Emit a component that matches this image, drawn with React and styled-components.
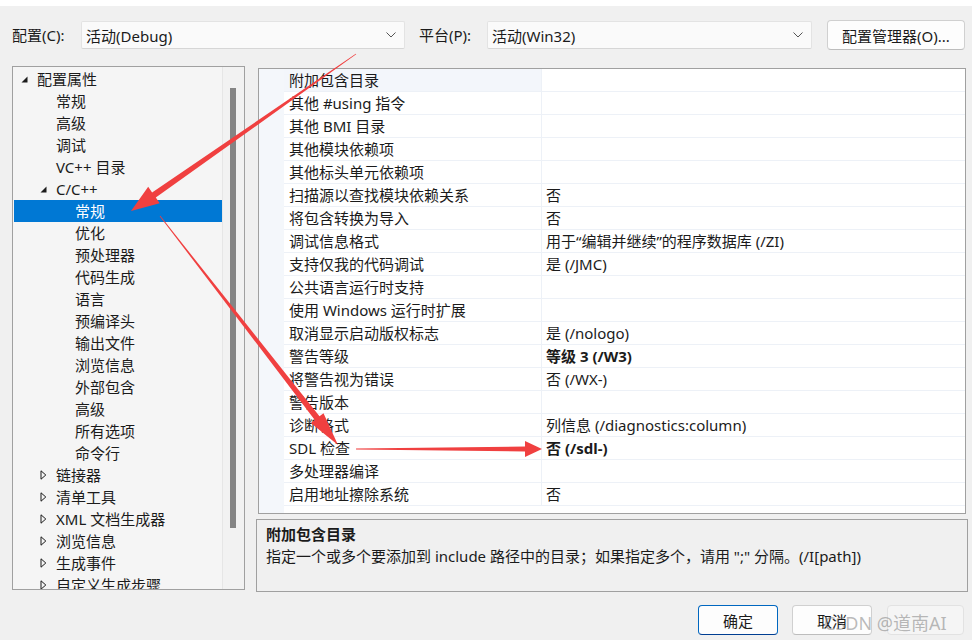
import React from 'react';
import styled, { createGlobalStyle } from 'styled-components';

const Global = createGlobalStyle`
  html, body { margin: 0; padding: 0; background: #f0f0f0; }
  body { font-family: "Noto Sans", "Noto Sans CJK SC", sans-serif; font-size: 15px; color: #1b1b1b; }
  * { box-sizing: border-box; }
`;

const Page = styled.div`
  position: relative;
  width: 972px;
  height: 640px;
  background: #f0f0f0;
  border-top: 6px solid #ffffff;
  overflow: hidden;
`;

const TopBar = styled.div`
  display: flex;
  align-items: center;
  height: 30px;
  margin-top: 14px;
  padding-left: 12px;
`;

const Label = styled.div`
  width: ${p => p.w}px;
  margin-left: ${p => p.ml || 0}px;
  white-space: nowrap;
  line-height: 30px;
`;

const Combo = styled.div`
  display: flex;
  align-items: center;
  justify-content: space-between;
  width: ${p => p.w}px;
  height: 28px;
  padding: 0 8px 0 4px;
  background: #fafafa;
  border: 1px solid #e3e3e3;
  border-bottom-color: #d6d6d6;
  border-radius: 2px;
  white-space: nowrap;
`;

const Button = styled.button`
  height: 30px;
  width: ${p => p.w}px;
  margin-left: ${p => p.ml || 0}px;
  font: inherit;
  color: ${p => (p.disabled ? '#a0a0a0' : '#1b1b1b')};
  background: ${p => (p.disabled ? '#f5f5f5' : '#fdfdfd')};
  border: 1px solid ${p => (p.primary ? '#0067c0' : p.disabled ? '#e2e2e2' : '#d0d0d0')};
  border-bottom-color: ${p => (p.primary ? '#003e92' : p.disabled ? '#e2e2e2' : '#bdbdbd')};
  border-radius: 4px;
  padding: 0;
`;

const Main = styled.div`
  display: flex;
  gap: 11px;
  margin-top: 16px;
  padding-left: 12px;
  height: 526px;
`;

const TreePanel = styled.div`
  display: flex;
  width: 233px;
  height: 524px;
  border: 1px solid #a0a0a0;
  background: #f5f5f5;
  overflow: hidden;
`;

const TreeList = styled.div`
  flex: 1;
  padding: 1px 0 0 1px;
  overflow: hidden;
`;

const TreeRow = styled.div`
  display: flex;
  align-items: center;
  height: 22px;
  line-height: 21px;
  padding-left: ${p => 7 + 19 * p.level}px;
  background: ${p => (p.selected ? '#0078d4' : 'transparent')};
  color: ${p => (p.selected ? '#ffffff' : '#1b1b1b')};
  white-space: nowrap;
`;

const Toggle = styled.span`
  display: flex;
  align-items: center;
  width: 16px;
  height: 22px;
`;

const ScrollTrack = styled.div`
  width: 22px;
  border-left: 1px solid #e6e6e6;
  background: #f2f2f2;
  padding: 21px 0 0 7px;
`;

const Thumb = styled.div`
  width: 6px;
  height: 440px;
  background: #858585;
`;

const RightCol = styled.div`
  display: flex;
  flex-direction: column;
  width: 712px;
`;

const Grid = styled.div`
  margin: 2px 2px 0;
  height: 446px;
  border: 1px solid #a0a0a0;
  background: #ffffff;
  display: flex;
`;

const Gutter = styled.div`
  width: 25px;
  background: #f4f7fb;
`;

const GridBody = styled.div`
  flex: 1;
`;

const GridRow = styled.div`
  display: grid;
  grid-template-columns: 258px 1fr;
  height: 23px;
  border-bottom: 1px solid #edf1f7;
`;

const NameCell = styled.div`
  padding-left: 5px;
  line-height: 22px;
  background: ${p => (p.active ? '#f3f6fb' : '#ffffff')};
  border-right: 1px solid #edf1f7;
  white-space: nowrap;
`;

const ValueCell = styled.div`
  padding-left: 4px;
  line-height: 22px;
  font-weight: ${p => (p.bold ? 700 : 400)};
  white-space: nowrap;
`;

const Desc = styled.div`
  margin-top: 5px;
  height: 73px;
  border: 1px solid #a0a0a0;
  background: #f0f0f0;
  padding: 3px 9px;
`;

const DescTitle = styled.div`
  font-weight: 700;
  line-height: 22px;
`;

const DescText = styled.div`
  line-height: 23px;
`;

const ButtonRow = styled.div`
  display: flex;
  justify-content: flex-end;
  margin-top: 13px;
  padding-right: 8px;
`;

const Watermark = styled.div`
  position: absolute;
  left: 824px;
  top: 605px;
  font-size: 18px;
  line-height: 24px;
  color: rgba(120, 120, 120, 0.5);
  white-space: nowrap;
  pointer-events: none;
`;

const Overlay = styled.svg`
  position: absolute;
  left: 0;
  top: 0;
  pointer-events: none;
`;

const Chevron = () => (
  <svg width="10" height="6" viewBox="0 0 10 6">
    <polyline points="0.5,0.5 5,5 9.5,0.5" fill="none" stroke="#555" strokeWidth="1" />
  </svg>
);

const Expanded = () => (
  <svg width="7" height="7" viewBox="0 0 7 7">
    <polygon points="6.5,0.5 6.5,6.5 0.5,6.5" fill="#1b1b1b" />
  </svg>
);

const Collapsed = () => (
  <svg width="7" height="10" viewBox="0 0 7 10">
    <polygon points="1,0.8 5.8,5 1,9.2" fill="none" stroke="#1b1b1b" strokeWidth="1" />
  </svg>
);

const tree = [
  { t: '配置属性', l: 0, e: 'open' },
  { t: '常规', l: 1 },
  { t: '高级', l: 1 },
  { t: '调试', l: 1 },
  { t: 'VC++ 目录', l: 1 },
  { t: 'C/C++', l: 1, e: 'open' },
  { t: '常规', l: 2, sel: true },
  { t: '优化', l: 2 },
  { t: '预处理器', l: 2 },
  { t: '代码生成', l: 2 },
  { t: '语言', l: 2 },
  { t: '预编译头', l: 2 },
  { t: '输出文件', l: 2 },
  { t: '浏览信息', l: 2 },
  { t: '外部包含', l: 2 },
  { t: '高级', l: 2 },
  { t: '所有选项', l: 2 },
  { t: '命令行', l: 2 },
  { t: '链接器', l: 1, e: 'closed' },
  { t: '清单工具', l: 1, e: 'closed' },
  { t: 'XML 文档生成器', l: 1, e: 'closed' },
  { t: '浏览信息', l: 1, e: 'closed' },
  { t: '生成事件', l: 1, e: 'closed' },
  { t: '自定义生成步骤', l: 1, e: 'closed' },
];

const props = [
  { n: '附加包含目录', active: true },
  { n: '其他 #using 指令' },
  { n: '其他 BMI 目录' },
  { n: '其他模块依赖项' },
  { n: '其他标头单元依赖项' },
  { n: '扫描源以查找模块依赖关系', v: '否' },
  { n: '将包含转换为导入', v: '否' },
  { n: '调试信息格式', v: '用于“编辑并继续”的程序数据库 (/ZI)' },
  { n: '支持仅我的代码调试', v: '是 (/JMC)' },
  { n: '公共语言运行时支持' },
  { n: '使用 Windows 运行时扩展' },
  { n: '取消显示启动版权标志', v: '是 (/nologo)' },
  { n: '警告等级', v: '等级 3 (/W3)', b: true },
  { n: '将警告视为错误', v: '否 (/WX-)' },
  { n: '警告版本' },
  { n: '诊断格式', v: '列信息 (/diagnostics:column)' },
  { n: 'SDL 检查', v: '否 (/sdl-)', b: true },
  { n: '多处理器编译' },
  { n: '启用地址擦除系统', v: '否' },
];

function arrowPoints(x1, y1, x2, y2, L, H, s, t = 0.4) {
  const dx = x2 - x1, dy = y2 - y1;
  const len = Math.hypot(dx, dy);
  const ux = dx / len, uy = dy / len;
  const nx = -uy, ny = ux;
  const bx = x2 - ux * L, by = y2 - uy * L;
  const pts = [
    [x1 + nx * t, y1 + ny * t],
    [bx + nx * s, by + ny * s],
    [bx + nx * H, by + ny * H],
    [x2, y2],
    [bx - nx * H, by - ny * H],
    [bx - nx * s, by - ny * s],
    [x1 - nx * t, y1 - ny * t],
  ];
  return pts.map(p => p.map(v => v.toFixed(1)).join(',')).join(' ');
}

const arrows = [
  arrowPoints(356, 54, 131, 211, 28, 10, 3.2),
  arrowPoints(160, 216, 338, 445, 34, 8, 3),
  arrowPoints(356, 449, 542, 449, 17, 8, 2.5),
];

export default function App() {
  return (
    <Page>
      <Global />
      <TopBar>
        <Label w={69}>配置(C):</Label>
        <Combo w={324}>
          <span>活动(Debug)</span>
          <Chevron />
        </Combo>
        <Label w={68} ml={14}>平台(P):</Label>
        <Combo w={325}>
          <span>活动(Win32)</span>
          <Chevron />
        </Combo>
        <Button w={138} ml={15}>配置管理器(O)...</Button>
      </TopBar>
      <Main>
        <TreePanel>
          <TreeList>
            {tree.map((r, i) => (
              <TreeRow key={i} level={r.l} selected={r.sel}>
                <Toggle>
                  {r.e === 'open' && <Expanded />}
                  {r.e === 'closed' && <Collapsed />}
                </Toggle>
                {r.t}
              </TreeRow>
            ))}
          </TreeList>
          <ScrollTrack>
            <Thumb />
          </ScrollTrack>
        </TreePanel>
        <RightCol>
          <Grid>
            <Gutter />
            <GridBody>
              {props.map((p, i) => (
                <GridRow key={i}>
                  <NameCell active={p.active}>{p.n}</NameCell>
                  <ValueCell bold={p.b}>{p.v || ''}</ValueCell>
                </GridRow>
              ))}
            </GridBody>
          </Grid>
          <Desc>
            <DescTitle>附加包含目录</DescTitle>
            <DescText>指定一个或多个要添加到 include 路径中的目录；如果指定多个，请用 ";" 分隔。(/I[path])</DescText>
          </Desc>
        </RightCol>
      </Main>
      <ButtonRow>
        <Button w={80} primary>确定</Button>
        <Button w={80} ml={14}>取消</Button>
        <Button w={77} ml={15} disabled></Button>
      </ButtonRow>
      <Watermark>CSDN @道南AI</Watermark>
      <Overlay width="972" height="640" viewBox="0 6 972 640">
        {arrows.map((p, i) => (
          <polygon key={i} points={p} fill="#f04040" />
        ))}
      </Overlay>
    </Page>
  );
}
